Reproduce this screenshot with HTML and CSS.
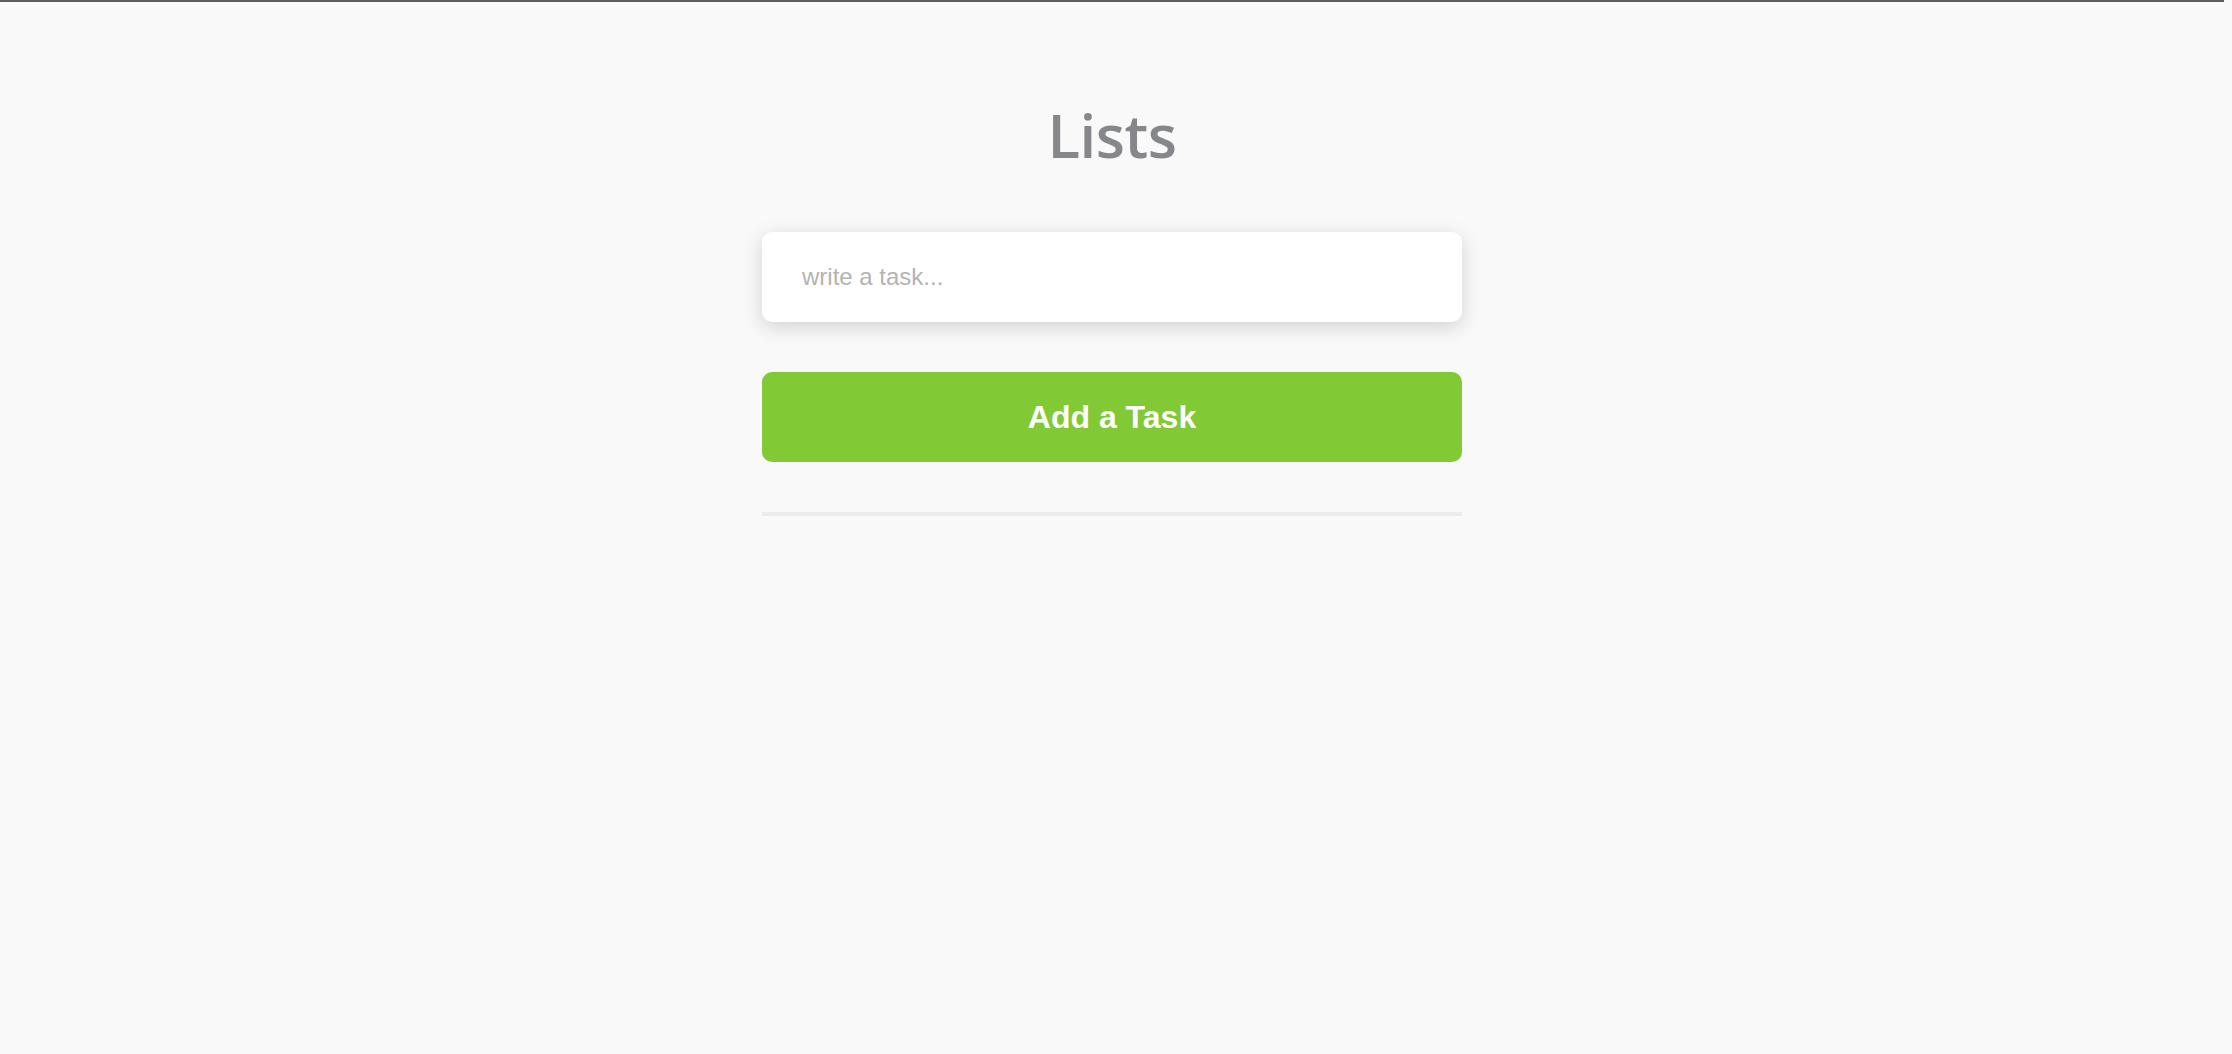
FILE: index.html
```html
<!DOCTYPE html>
<html>
<head>
<meta charset="utf-8">
<link rel="stylesheet" href="styles.css">
<title>Lists</title>
</head>
<body>
<div class="topbar"></div>
<main class="app">
  <h1 class="title">Lists</h1>
  <input class="task-input" type="text" placeholder="write a task...">
  <button class="add-btn">Add a Task</button>
  <div class="divider"></div>
</main>
</body>
</html>
```

FILE: styles.css
```css
html, body {
  margin: 0;
  padding: 0;
  background: #f9f9f9;
  height: 100%;
}
body {
  padding-right: 8px;
  font-family: "Liberation Sans", Arial, sans-serif;
}
.topbar {
  height: 2px;
  background: #5f5e63;
}
.app {
  width: 700px;
  margin: 0 auto;
  display: flex;
  flex-direction: column;
}
.title {
  margin: 0;
  padding-top: 102px;
  height: 130px;
  box-sizing: border-box;
  font-family: "Open Sans", Lato, sans-serif;
  font-weight: 600;
  font-size: 60px;
  line-height: 62px;
  letter-spacing: -0.5px;
  color: #85878a;
  text-align: center;
}
.task-input {
  height: 90px;
  box-sizing: border-box;
  border: none;
  outline: none;
  border-radius: 10px;
  background: #fff;
  padding: 0 40px;
  font-family: "Liberation Sans", Arial, sans-serif;
  font-size: 24px;
  color: #555;
  box-shadow: 0 5px 20px rgba(0, 0, 0, 0.16);
  margin-top: 100px;
}
.task-input::placeholder {
  color: #b3b3b3;
}
.add-btn {
  margin-top: 50px;
  height: 90px;
  border: none;
  border-radius: 10px;
  background: #82c936;
  color: #fff;
  font-family: "Liberation Sans", Arial, sans-serif;
  font-weight: 700;
  font-size: 32px;
  cursor: pointer;
}
.divider {
  margin-top: 50px;
  height: 4px;
  background: #ececee;
}
```
